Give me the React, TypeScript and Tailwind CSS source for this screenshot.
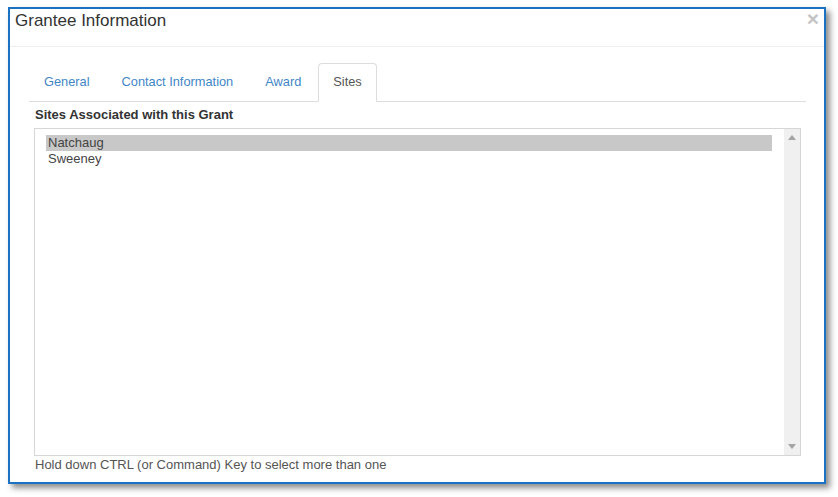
import React from "react";

export default function App() {
  const font = { fontFamily: '"Liberation Sans", Arial, sans-serif' };
  return (
    <div className="w-[838px] h-[497px] bg-white overflow-hidden" style={font}>
      <div className="ml-[8px] mt-[7px] w-[818px] h-[477px] border-2 border-[#1b72c2] bg-white shadow-[4px_4px_6px_rgba(0,0,0,0.45)] flex flex-col">
        <div className="h-[38px] border-b border-[#eeeeee] flex items-start justify-between pl-[5px] pr-[5px] shrink-0">
          <div className="text-[17px] leading-[20px] text-[#333] mt-[2px]">Grantee Information</div>
          <div className="text-[21px] leading-[21px] font-bold text-[#c4c4c4] -mt-[1px]">×</div>
        </div>
        <div className="pl-[19px] pr-[18px] pt-[16px] flex flex-col flex-1">
          <div className="flex border-b border-[#dddddd] h-[39px] shrink-0">
            <div className="px-[15px] h-[38px] flex items-center text-[12.8px] text-[#3f86c7] mr-[2px]">General</div>
            <div className="px-[15px] h-[38px] flex items-center text-[12.8px] text-[#3f86c7] mr-[2px]">Contact Information</div>
            <div className="px-[15px] h-[38px] flex items-center text-[12.8px] text-[#3f86c7] mr-[2px]">Award</div>
            <div className="px-[14px] h-[39px] flex items-center text-[12.8px] text-[#555] border border-[#dddddd] border-b-white rounded-t-[4px] bg-white -mb-px pb-px">Sites</div>
          </div>
          <div className="px-[5px] flex flex-col">
            <div className="mt-[4px] text-[13px] leading-[18px] font-bold text-[#333] pl-[1px]">Sites Associated with this Grant</div>
            <div className="mt-[4px] h-[328px] border border-[#d6d6d6] flex">
              <div className="flex-1 pl-[11px] pr-[12px] pt-[6px]">
                <div className="h-[16px] bg-[#c8c8c8] pl-[2px] text-[13px] leading-[16px] text-[#444]">Natchaug</div>
                <div className="h-[16px] pl-[2px] text-[13px] leading-[16px] text-[#444]">Sweeney</div>
              </div>
              <div className="w-[16px] bg-[#f0f0f0] flex flex-col items-center justify-between pt-[6px] pb-[6px]">
                <svg width="8" height="5" viewBox="0 0 8 5"><path d="M0 5 L4 0 L8 5 Z" fill="#a3a3a3" /></svg>
                <svg width="8" height="5" viewBox="0 0 8 5"><path d="M0 0 L4 5 L8 0 Z" fill="#a3a3a3" /></svg>
              </div>
            </div>
            <div className="text-[13px] leading-[18px] text-[#555] pl-[1px]">Hold down CTRL (or Command) Key to select more than one</div>
          </div>
        </div>
      </div>
    </div>
  );
}
